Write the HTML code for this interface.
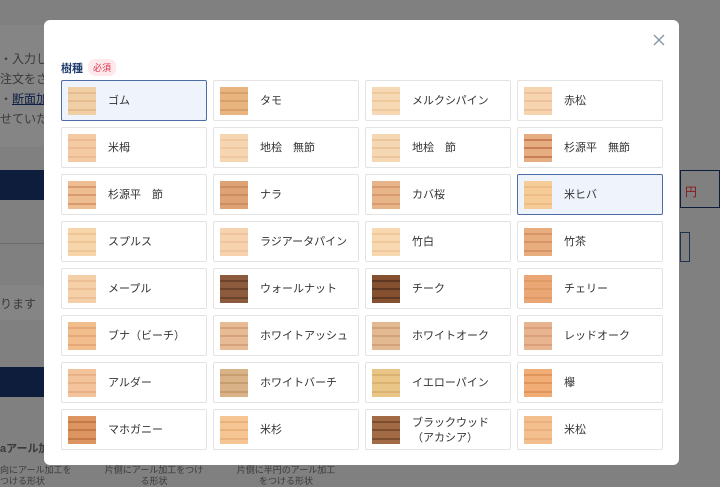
<!DOCTYPE html>
<html><head><meta charset="utf-8"><style>
*{box-sizing:border-box;margin:0;padding:0}
body{width:720px;height:486px;overflow:hidden;background:#808080;font-family:"Liberation Sans","Noto Sans CJK JP",sans-serif;position:relative}
.bg{position:absolute;color:#3a3a3a;font-size:12px}
.modal{position:absolute;left:44px;top:20px;width:635px;height:445px;background:#fff;border-radius:6px}
.x{position:absolute;left:608px;top:13px;width:14px;height:14px}
.title{position:absolute;left:17px;top:40px;font-size:11px;font-weight:bold;color:#1f3a6e}
.badge{position:absolute;left:44px;top:39px;background:#fde9ec;color:#e0304a;font-size:9px;padding:2px 5px;border-radius:7px}
.card{position:absolute;width:146px;height:41px;border:1px solid #e3e3e3;border-radius:2px;background:#fff}
.card.sel{background:#eef3fc;border-color:#4e6da5}
.sw{position:absolute;left:6px;top:6px;width:28px;height:28px}
.lb{position:absolute;left:46px;top:1px;height:39px;display:flex;align-items:center;font-size:11px;color:#333;line-height:15px;width:96px}
</style></head><body>
<div class="bg" style="left:0;top:25px;width:44px;height:122px;background:#858585"></div>
<div class="bg" style="left:0;top:50px;">・入力し</div>
<div class="bg" style="left:0;top:70px;">注文をさ</div>
<div class="bg" style="left:0;top:90px;">・<u style="color:#0d1f45">断面加</u></div>
<div class="bg" style="left:0;top:110px;">せていた</div>
<div class="bg" style="left:0;top:170px;width:44px;height:30px;background:#0f1d3d"></div>
<div class="bg" style="left:0;top:243px;width:44px;height:1px;background:#6a6a6a"></div>
<div class="bg" style="left:0;top:285px;width:44px;height:35px;background:#858585"></div>
<div class="bg" style="left:0;top:295px;">ります</div>
<div class="bg" style="left:0;top:367px;width:44px;height:30px;background:#0f1d3d"></div>
<div class="bg" style="left:0;top:440px;font-weight:bold;font-size:11px">aアール加工</div>
<div class="bg" style="left:0;top:465px;font-size:9px;line-height:11px;width:80px">向にアール加工を<br>つける形状</div>
<div class="bg" style="left:104px;top:465px;font-size:9px;line-height:11px;width:100px;text-align:center">片側にアール加工をつける形状</div>
<div class="bg" style="left:236px;top:465px;font-size:9px;line-height:11px;width:100px;text-align:center">片側に半円のアール加工をつける形状</div>
<div class="bg" style="left:680px;top:170px;width:40px;height:38px;border:1px solid #0f1d3d;color:#8a1a20;padding:12px 0 0 4px">円</div>
<div class="bg" style="left:680px;top:232px;width:10px;height:30px;border:1px solid #1f3050"></div>
<div class="modal">
<svg class="x" viewBox="0 0 14 14"><path d="M2 2L12 12M12 2L2 12" stroke="#8a94a6" stroke-width="1.4"/></svg>
<div class="title">樹種</div><div class="badge">必須</div>
</div>
<div id="g"></div>
<script>
var items=[["ゴム","#f0cfa6","#e6bb8d",1],["タモ","#e8b581","#d9a06a"],["メルクシパイン","#f6d8b4","#efc89c"],["赤松","#f6d4b0","#edc29b"],
["米栂","#f4caa4","#ecbb93"],["地桧　無節","#f6d5b2","#efc7a0"],["地桧　節","#f6d7b3","#ecc59d"],["杉源平　無節","#e6ad82","#c97f55"],
["杉源平　節","#eebe92","#d99a6e"],["ナラ","#dea375","#cc8e5f"],["カバ桜","#e7b389","#d89c70"],["米ヒバ","#f5cb98","#eebd85",1],
["スプルス","#f7d5aa","#eec594"],["ラジアータパイン","#f6d2ae","#efc5a0"],["竹白","#f8d8b0","#f0c89c"],["竹茶","#e8ad7e","#d99465"],
["メープル","#f5cfa8","#ecbf96"],["ウォールナット","#8c5a3c","#6d432b"],["チーク","#85502f","#5e3820"],["チェリー","#eaa775","#e09a65"],
["ブナ（ビーチ）","#f1bd8c","#e5a877"],["ホワイトアッシュ","#e7bb96","#d5a27c"],["ホワイトオーク","#e3b992","#d2a27c"],["レッドオーク","#e8b48f","#d9a07b"],
["アルダー","#f3c49c","#e9b186"],["ホワイトバーチ","#d9b387","#c69d6f"],["イエローパイン","#e9c688","#dab372"],["欅","#f0ad75","#e0955c"],
["マホガニー","#dc9560","#c57a45"],["米杉","#f5c593","#eab27c"],["ブラックウッド（アカシア）","#a26b45","#7c4d2e"],["米松","#f3bf8f","#ebb07e"]];
var h="";
items.forEach(function(it,i){var c=i%4,r=Math.floor(i/4);var x=61+c*152,y=80+r*47;
h+='<div class="card'+(it[3]?' sel':'')+'" style="left:'+x+'px;top:'+y+'px"><div class="sw" style="background:linear-gradient(180deg,'+it[1]+' 0 5px,'+it[2]+' 5px 7px,'+it[1]+' 7px 13px,'+it[2]+' 13px 15px,'+it[1]+' 15px 22px,'+it[2]+' 22px 24px,'+it[1]+' 24px)"></div><div class="lb">'+it[0]+'</div></div>';});
document.getElementById("g").innerHTML=h;
</script>
</body></html>
